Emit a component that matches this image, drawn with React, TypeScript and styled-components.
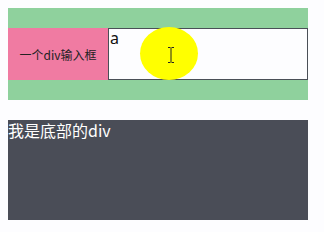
import React from "react";
import styled, { createGlobalStyle } from "styled-components";

const Global = createGlobalStyle`
  html, body { margin: 0; padding: 0; background: #fdfdff; }
  body { padding: 8px; font-family: "Noto Sans CJK SC", "Noto Sans", sans-serif; }
`;

const Band = styled.div`
  width: 300px;
  padding: 20px 0;
  background: #8fd19d;
  display: flex;
  position: relative;
`;

const Label = styled.div`
  width: 100px;
  height: 52px;
  background: #f07ba2;
  display: flex;
  align-items: center;
  justify-content: center;
  font-size: 12px;
  color: #222;
`;

const Editor = styled.div`
  flex: 1;
  height: 50px;
  border: 1px solid #4a4f57;
  background: #fdfdff;
  font-size: 16px;
  line-height: 18px;
  padding-left: 1px;
  color: #111;
  font-family: "Noto Sans", sans-serif;
`;

const Highlight = styled.div`
  position: absolute;
  left: 132px;
  top: 19px;
  width: 58px;
  height: 53px;
  border-radius: 50%;
  background: #ffff00;
  display: flex;
  align-items: center;
  justify-content: center;
`;

const Cursor = styled.svg`
  margin-left: 4px;
  margin-top: 3px;
`;

export default function App() {
  return (
    <>
      <Global />
      <Band>
        <Label>一个div输入框</Label>
        <Editor>a</Editor>
        <Highlight>
          <Cursor width="8" height="16" viewBox="0 0 8 16">
            <path d="M1 0.5h2.5M4.5 0.5h2.5M4 1v14M1 15.5h2.5M4.5 15.5h2.5" stroke="#222" strokeWidth="1" fill="none" />
          </Cursor>
        </Highlight>
      </Band>
      <Bottom>我是底部的div</Bottom>
    </>
  );
}

const Bottom = styled.div`
  margin-top: 20px;
  width: 300px;
  height: 100px;
  background: #4a4d57;
  color: #fff;
  font-size: 16px;
  line-height: 20px;
`;
